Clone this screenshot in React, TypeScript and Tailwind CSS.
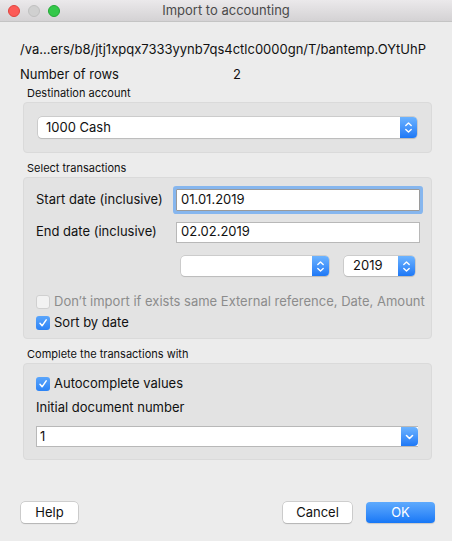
import React from "react";

const font = { fontFamily: 'Inter, "Liberation Sans", Arial, sans-serif' };

function Stepper({ single = false }: { single?: boolean }) {
  return (
    <div className="w-[17px] h-full shrink-0 rounded-r-[4px] bg-gradient-to-b from-[#6cb3ff] to-[#1d78f6] flex items-center justify-center">
      {single ? (
        <svg width="9" height="6" viewBox="0 0 9 6">
          <path d="M1.5 1.5 L4.5 4.5 L7.5 1.5" stroke="white" strokeWidth="1.6" fill="none" strokeLinecap="round" strokeLinejoin="round" />
        </svg>
      ) : (
        <svg width="9" height="13" viewBox="0 0 9 13">
          <path d="M1.8 4.5 L4.5 2 L7.2 4.5" stroke="white" strokeWidth="1.4" fill="none" strokeLinecap="round" strokeLinejoin="round" />
          <path d="M1.8 8.5 L4.5 11 L7.2 8.5" stroke="white" strokeWidth="1.4" fill="none" strokeLinecap="round" strokeLinejoin="round" />
        </svg>
      )}
    </div>
  );
}

function Checkbox({ checked, disabled }: { checked?: boolean; disabled?: boolean }) {
  if (checked) {
    return (
      <div className="w-[14px] h-[14px] shrink-0 rounded-[3px] bg-gradient-to-b from-[#5aa5fb] to-[#2b83f6] flex items-center justify-center">
        <svg width="10" height="10" viewBox="0 0 10 10">
          <path d="M2 5.3 L4.1 7.8 L8.2 1.8" stroke="white" strokeWidth="1.5" fill="none" strokeLinecap="round" strokeLinejoin="round" />
        </svg>
      </div>
    );
  }
  return (
    <div
      className={`w-[14px] h-[14px] shrink-0 rounded-[3px] border ${disabled ? "border-[#d0d0d0] bg-[#f2f2f2]" : "border-[#b0b0b0] bg-white"}`}
    />
  );
}

export default function App() {
  return (
    <div className="w-[452px] h-[541px] bg-[#ececec] flex flex-col text-[#111]" style={font}>
      {/* Title bar */}
      <div className="relative h-[22px] bg-gradient-to-b from-[#ebe9eb] to-[#d4d2d4] border-b border-[#c4c4c4] flex items-center justify-center">
        <div className="absolute left-[8px] top-[5px] flex gap-[8px]">
          <div className="w-[12px] h-[12px] rounded-full bg-[#fc5b57] border border-[#e0443e]" />
          <div className="w-[12px] h-[12px] rounded-full bg-[#d0d0d0] border border-[#c0c0c0]" />
          <div className="w-[12px] h-[12px] rounded-full bg-[#34c84a] border border-[#22a835]" />
        </div>
        <span className="text-[13px] text-[#4a4a4a] leading-none">Import to accounting</span>
      </div>

      <div className="flex flex-col pl-[20px] pr-[20px] flex-1">
        <div className="mt-[19px] text-[13px] leading-[16px] whitespace-nowrap">
          /va...ers/b8/jtj1xpqx7333yynb7qs4ctlc0000gn/T/bantemp.OYtUhP
        </div>
        <div className="mt-[9px] text-[13px] leading-[16px] flex">
          <span className="w-[213px]">Number of rows</span>
          <span>2</span>
        </div>

        <div className="mt-[4px] ml-[7px] text-[11px] leading-[14px]">Destination account</div>
        <div className="mt-[2px] ml-[3px] h-[51px] bg-[#e3e3e3] border border-[#dadada] rounded-[4px] pl-[14px] pr-[14px] flex items-center">
          <div className="flex-1 h-[21px] bg-white rounded-[4px] shadow-[0_0_0_0.5px_#b5b5b5,0_1px_1px_rgba(0,0,0,0.15)] flex items-center">
            <span className="flex-1 pl-[8px] text-[13px]">1000 Cash</span>
            <Stepper />
          </div>
        </div>

        <div className="mt-[8px] ml-[7px] text-[11px] leading-[14px]">Select transactions</div>
        <div className="mt-[2px] ml-[3px] h-[162px] bg-[#e3e3e3] border border-[#dadada] rounded-[4px] pl-[12px] pr-[11px] pt-[11px] flex flex-col">
          <div className="flex items-center h-[22px]">
            <span className="w-[140px] text-[13px]">Start date (inclusive)</span>
            <div className="flex-1 h-[22px] bg-white border border-[#9a9a9a] shadow-[0_0_0_3px_#86b6ee] rounded-[1px] flex items-center pl-[4px] text-[13px]">
              01.01.2019
            </div>
          </div>
          <div className="flex items-center h-[22px] mt-[10px]">
            <span className="w-[140px] text-[13px]">End date (inclusive)</span>
            <div className="flex-1 h-[21px] bg-white border border-[#b8b8b8] flex items-center pl-[4px] text-[13px]">
              02.02.2019
            </div>
          </div>
          <div className="flex mt-[13px] h-[20px] pl-[145px]">
            <div className="w-[148px] h-[20px] bg-white rounded-[4px] shadow-[0_0_0_0.5px_#b5b5b5,0_1px_1px_rgba(0,0,0,0.15)] flex">
              <span className="flex-1" />
              <Stepper />
            </div>
            <div className="ml-[15px] w-[71px] h-[20px] bg-white rounded-[4px] shadow-[0_0_0_0.5px_#b5b5b5,0_1px_1px_rgba(0,0,0,0.15)] flex items-center">
              <span className="flex-1 pl-[9px] text-[13px]">2019</span>
              <Stepper />
            </div>
          </div>
          <div className="flex items-center h-[17px] mt-[17px]">
            <Checkbox disabled />
            <span className="ml-[4px] text-[13px] text-[#8c8c8c] whitespace-nowrap">
              Don’t import if exists same External reference, Date, Amount
            </span>
          </div>
          <div className="flex items-center h-[17px] mt-[4px]">
            <Checkbox checked />
            <span className="ml-[4px] text-[13px]">Sort by date</span>
          </div>
        </div>

        <div className="mt-[8px] ml-[7px] text-[11px] leading-[14px]">Complete the transactions with</div>
        <div className="mt-[2px] ml-[3px] h-[97px] bg-[#e3e3e3] border border-[#dadada] rounded-[4px] pl-[12px] pr-[13px] pt-[11px] flex flex-col">
          <div className="flex items-center h-[17px]">
            <Checkbox checked />
            <span className="ml-[4px] text-[13px]">Autocomplete values</span>
          </div>
          <div className="mt-[7px] text-[13px] leading-[16px]">Initial document number</div>
          <div className="mt-[11px] h-[21px] bg-white border border-[#b8b8b8] border-r-0 flex items-stretch">
            <span className="flex-1 pl-[3px] text-[13px] flex items-center">1</span>
            <Stepper single />
          </div>
        </div>

        <div className="flex-1" />
      </div>

      <div className="flex items-center pl-[21px] pr-[17px] pb-[18px] h-[39px]">
        <button className="w-[57px] h-[21px] bg-white rounded-[4px] shadow-[0_0_0_0.5px_#b0b0b0,0_1px_1px_rgba(0,0,0,0.2)] text-[13px]">Help</button>
        <div className="flex-1" />
        <button className="w-[69px] h-[21px] bg-white rounded-[4px] shadow-[0_0_0_0.5px_#b0b0b0,0_1px_1px_rgba(0,0,0,0.2)] text-[13px]">Cancel</button>
        <button className="ml-[14px] w-[69px] h-[21px] rounded-[4px] bg-gradient-to-b from-[#5eaafd] to-[#1577f6] text-white text-[13px] shadow-[0_1px_1px_rgba(0,0,0,0.15)]">OK</button>
      </div>
    </div>
  );
}
